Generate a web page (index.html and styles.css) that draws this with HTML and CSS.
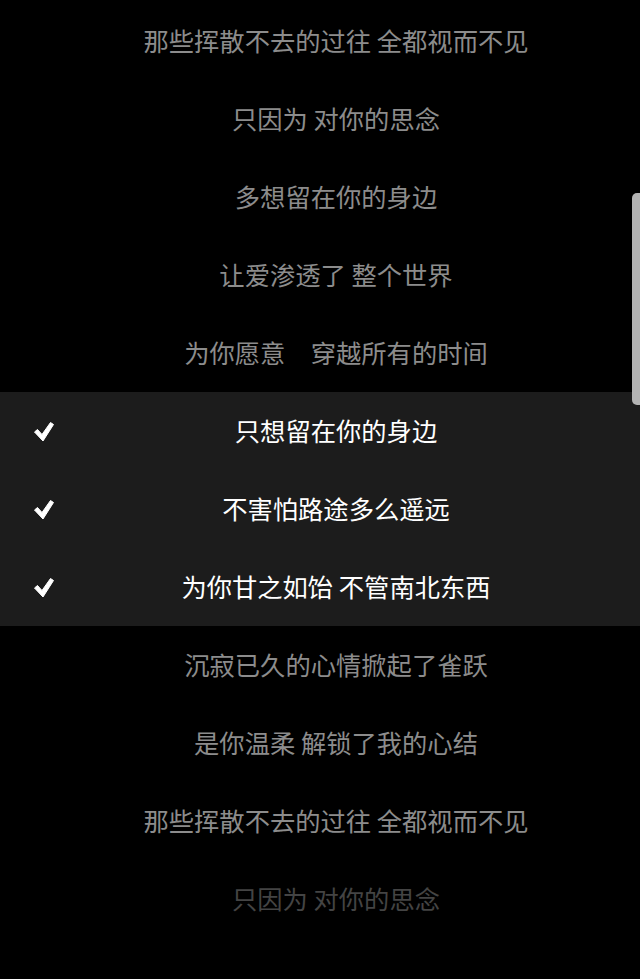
FILE: index.html
```html
<!DOCTYPE html>
<html lang="zh-CN">
<head>
    <meta charset="UTF-8">
    <meta name="viewport" content="width=device-width, initial-scale=1.0">
    <title>歌词</title>
    <link rel="stylesheet" href="styles.css">
</head>
<body>
<div id="lyric-list">
    <div class="lyric-row">那些挥散不去的过往 全都视而不见</div>
    <div class="lyric-row">只因为 对你的思念</div>
    <div class="lyric-row">多想留在你的身边</div>
    <div class="lyric-row">让爱渗透了 整个世界</div>
    <div class="lyric-row">为你愿意　穿越所有的时间</div>
    <div class="lyric-row selected"><svg class="check" viewBox="0 0 22 22"><path d="M1.5 11 L4.5 8.5 L9 13.5 L17.5 1.5 L20.5 3.5 L10 20 Z" fill="#fff" stroke="#fff" stroke-width="1" stroke-linejoin="round"/></svg>只想留在你的身边</div>
    <div class="lyric-row selected"><svg class="check" viewBox="0 0 22 22"><path d="M1.5 11 L4.5 8.5 L9 13.5 L17.5 1.5 L20.5 3.5 L10 20 Z" fill="#fff" stroke="#fff" stroke-width="1" stroke-linejoin="round"/></svg>不害怕路途多么遥远</div>
    <div class="lyric-row selected"><svg class="check" viewBox="0 0 22 22"><path d="M1.5 11 L4.5 8.5 L9 13.5 L17.5 1.5 L20.5 3.5 L10 20 Z" fill="#fff" stroke="#fff" stroke-width="1" stroke-linejoin="round"/></svg>为你甘之如饴 不管南北东西</div>
    <div class="lyric-row">沉寂已久的心情掀起了雀跃</div>
    <div class="lyric-row">是你温柔 解锁了我的心结</div>
    <div class="lyric-row">那些挥散不去的过往 全都视而不见</div>
    <div class="lyric-row faded">只因为 对你的思念</div>
</div>
<div id="scroll-thumb"></div>
</body>
</html>
```

FILE: styles.css
```css
html, body {
    margin: 0;
    height: 100%;
    background-color: #000;
    overflow: hidden;
}

body {
    font-family: "Noto Sans CJK SC", "Noto Sans", sans-serif;
}

#lyric-list {
    padding-top: 2px;
}

.lyric-row {
    position: relative;
    box-sizing: border-box;
    height: 78px;
    padding: 0 0 3px 32px;
    display: flex;
    align-items: center;
    justify-content: center;
    font-size: 25.3px;
    color: #8c8c8c;
    white-space: pre;
}

.lyric-row.selected {
    background-color: #1c1c1c;
    color: #fff;
}

.lyric-row.faded {
    color: #444;
}

.check {
    position: absolute;
    left: 33px;
    top: 29px;
    width: 22px;
    height: 22px;
}

#scroll-thumb {
    position: fixed;
    top: 193px;
    right: 0;
    width: 8px;
    height: 212px;
    background-color: #b3b3b3;
    border-radius: 5px 0 0 5px;
}
```
